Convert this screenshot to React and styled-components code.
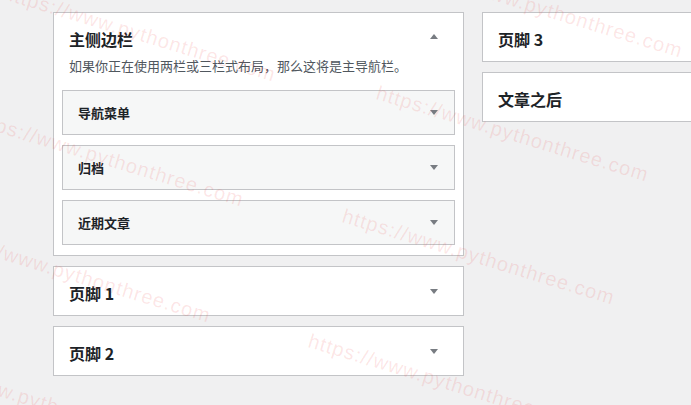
import styled, { createGlobalStyle } from "styled-components";

const GlobalStyle = createGlobalStyle`
  html, body {
    margin: 0;
    padding: 0;
    background: #f0f0f1;
    overflow: hidden;
  }
  body {
    font-family: "Noto Sans CJK SC", "Noto Sans", "Liberation Sans", sans-serif;
    color: #1d2327;
  }
`;

const Page = styled.div`
  position: relative;
  width: 691px;
  height: 405px;
  overflow: hidden;
  display: flex;
  align-items: flex-start;
  gap: 18px;
  padding: 12px 0 0 53px;
  box-sizing: border-box;
`;

const Column = styled.div`
  flex: 0 0 411px;
  display: flex;
  flex-direction: column;
  gap: 10px;
`;

const Card = styled.div`
  background: #fff;
  border: 1px solid #c3c4c7;
  box-sizing: border-box;
`;

const CardHeader = styled.div`
  display: flex;
  align-items: center;
  justify-content: space-between;
  padding: ${(p) => (p.$open ? "16px 25px 0 15px" : "16px 25px 12px 15px")};
`;

const Title = styled.h2`
  margin: 0;
  font-size: 16px;
  line-height: 20px;
  font-weight: 700;
  color: #1d2327;
`;

const Desc = styled.p`
  margin: 8px 15px 0;
  font-size: 13px;
  line-height: 18px;
  color: #50575e;
`;

const WidgetList = styled.div`
  display: flex;
  flex-direction: column;
  gap: 10px;
  padding: 15px 8px 10px;
`;

const Widget = styled.div`
  height: 45px;
  box-sizing: border-box;
  background: #f6f7f7;
  border: 1px solid #c3c4c7;
  display: flex;
  align-items: center;
  justify-content: space-between;
  padding: 0 16px 0 15px;
`;

const WidgetName = styled.span`
  font-size: 13px;
  font-weight: 600;
  color: #1d2327;
`;

const ArrowIcon = styled.svg`
  display: block;
  width: 8px;
  height: 5px;
  margin-top: ${(p) => p.$shift || 0}px;
  fill: #787c82;
`;

const Arrow = ({ up, shift }) => (
  <ArrowIcon viewBox="0 0 8 5" $shift={shift}>
    {up ? <polygon points="0,5 8,5 4,0" /> : <polygon points="0,0 8,0 4,5" />}
  </ArrowIcon>
);

const Watermark = styled.div`
  position: absolute;
  inset: 0;
  pointer-events: none;
`;

const Mark = styled.span`
  position: absolute;
  white-space: nowrap;
  font-family: "Liberation Sans", Arial, sans-serif;
  font-size: 20px;
  line-height: 20px;
  letter-spacing: 1px;
  color: rgba(235, 60, 60, 0.13);
  transform: rotate(17deg);
  transform-origin: 0 50%;
`;

const marks = [
  [4, -8],
  [-28, 117],
  [-61, 233],
  [-96, 360],
  [411, -32],
  [377, 92],
  [343, 215],
  [309, 340],
];

const widgets = ["导航菜单", "归档", "近期文章"];

const Collapsed = ({ title }) => (
  <Card>
    <CardHeader>
      <Title>{title}</Title>
      <Arrow shift={-4} />
    </CardHeader>
  </Card>
);

export default function App() {
  return (
    <>
      <GlobalStyle />
      <Page>
        <Column>
          <Card>
            <CardHeader $open>
              <Title>主侧边栏</Title>
              <Arrow up shift={-5} />
            </CardHeader>
            <Desc>如果你正在使用两栏或三栏式布局，那么这将是主导航栏。</Desc>
            <WidgetList>
              {widgets.map((w) => (
                <Widget key={w}>
                  <WidgetName>{w}</WidgetName>
                  <Arrow />
                </Widget>
              ))}
            </WidgetList>
          </Card>
          <Collapsed title="页脚 1" />
          <Collapsed title="页脚 2" />
        </Column>
        <Column>
          <Collapsed title="页脚 3" />
          <Collapsed title="文章之后" />
        </Column>
        <Watermark>
          {marks.map(([x, y], i) => (
            <Mark key={i} style={{ left: x, top: y - 10 }}>
              https://www.pythonthree.com
            </Mark>
          ))}
        </Watermark>
      </Page>
    </>
  );
}
